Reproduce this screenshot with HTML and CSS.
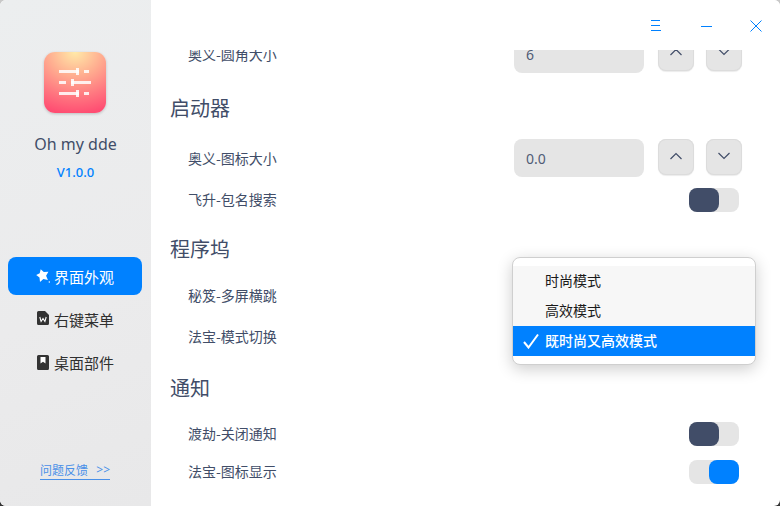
FILE: index.html
```html
<!DOCTYPE html>
<html lang="zh-CN">
<head>
<meta charset="utf-8">
<title>Oh my dde</title>
<link rel="stylesheet" href="styles.css">
</head>
<body>
<div class="window">
  <aside class="sidebar">
    <div class="logo">
      <svg width="62" height="61" viewBox="0 0 62 61" aria-hidden="true">
        <g fill="#fff" fill-opacity=".85">
          <rect x="15" y="18" width="20" height="3"/><rect x="32" y="16" width="3" height="7"/><rect x="40" y="18" width="5" height="3"/>
          <rect x="15" y="29" width="7" height="3"/><rect x="27" y="29" width="20" height="3"/><rect x="27" y="27" width="3" height="7"/>
          <rect x="15" y="40" width="20" height="3"/><rect x="32" y="38" width="3" height="7"/><rect x="40" y="40" width="5" height="3"/>
        </g>
      </svg>
    </div>
    <div class="app-name">Oh my dde</div>
    <div class="app-version">V1.0.0</div>
    <nav class="nav">
      <div class="nav-item nav-item-active">
        <svg class="nav-icon" width="14" height="16" viewBox="0 0 14 16" aria-hidden="true"><path fill="#fff" d="M4.700 1.200 7.800 4.100 12.400 3.700 10.100 7.700 11.900 11.900 7.400 11 4 14 3.500 9.500 .2 7.100 3.700 5.200z"/><circle cx="13.300" cy="14" r=".7" fill="#fff"/></svg>
        <span>界面外观</span>
      </div>
      <div class="nav-item">
        <svg class="nav-icon" width="14" height="16" viewBox="0 0 14 16" aria-hidden="true"><path fill="#333" d="M2.500 0H9l4 4v8.500A1.500 1.500 0 0 1 11.500 14h-9A1.500 1.500 0 0 1 1 12.500v-11A1.500 1.500 0 0 1 2.500 0z"/><path fill="none" stroke="#fff" stroke-width="1.100" d="M3.800 6l1.300 4.500L7 7.500l1.900 3L10.200 6"/></svg>
        <span>右键菜单</span>
      </div>
      <div class="nav-item">
        <svg class="nav-icon" width="14" height="16" viewBox="0 0 14 16" aria-hidden="true"><path fill="#333" d="M2.500 1h9A1.500 1.500 0 0 1 13 2.500v12a1.500 1.500 0 0 1-1.500 1.500h-9A1.500 1.500 0 0 1 1 14.500v-12A1.500 1.500 0 0 1 2.500 1z"/><path fill="#fff" d="M4.500 3h5v6.500L7 7.800 4.500 9.500z"/></svg>
        <span>桌面部件</span>
      </div>
    </nav>
    <a class="feedback"><span>问题反馈</span><span class="feedback-arrows">&gt;&gt;</span></a>
  </aside>

  <main class="main">
    <header class="titlebar">
      <svg width="16" height="12" viewBox="0 0 16 12" class="tb-menu" aria-hidden="true"><path stroke="#0081ff" fill="none" d="M1 .5h9M1 5.500h9M1 10.500h10"/></svg>
      <svg width="12" height="2" viewBox="0 0 12 2" class="tb-min" aria-hidden="true"><path stroke="#0081ff" stroke-width="1" fill="none" d="M0 .5h11"/></svg>
      <svg width="12" height="12" viewBox="0 0 12 12" class="tb-close" aria-hidden="true"><path stroke="#0081ff" fill="none" d="M.5.500l11 11M11.500.500l-11 11"/></svg>
    </header>
    <div class="content">
      <div class="scroll">
        <div class="row row-spin">
          <span class="label">奥义-圆角大小</span>
          <div class="spin"><div class="spin-input">6</div>
            <button class="spin-btn"><svg width="14" height="8" viewBox="0 0 14 8"><path d="M1.500 7 7 1.500 12.500 7" class="chev"/></svg></button>
            <button class="spin-btn"><svg width="14" height="8" viewBox="0 0 14 8"><path d="M1.500 1 7 6.500 12.500 1" class="chev"/></svg></button>
          </div>
        </div>
        <h2 class="heading heading-1">启动器</h2>
        <div class="row row-spin row-spin-2">
          <span class="label">奥义-图标大小</span>
          <div class="spin"><div class="spin-input">0.0</div>
            <button class="spin-btn"><svg width="14" height="8" viewBox="0 0 14 8"><path d="M1.500 7 7 1.500 12.500 7" class="chev"/></svg></button>
            <button class="spin-btn"><svg width="14" height="8" viewBox="0 0 14 8"><path d="M1.500 1 7 6.500 12.500 1" class="chev"/></svg></button>
          </div>
        </div>
        <div class="row row-a">
          <span class="label">飞升-包名搜索</span>
          <div class="toggle"><div class="knob"></div></div>
        </div>
        <h2 class="heading heading-2">程序坞</h2>
        <div class="row row-b"><span class="label">秘笈-多屏横跳</span></div>
        <div class="row row-c"><span class="label">法宝-模式切换</span></div>
        <h2 class="heading heading-3">通知</h2>
        <div class="row row-d">
          <span class="label">渡劫-关闭通知</span>
          <div class="toggle"><div class="knob"></div></div>
        </div>
        <div class="row row-e">
          <span class="label">法宝-图标显示</span>
          <div class="toggle toggle-on"><div class="knob"></div></div>
        </div>
      </div>
    </div>
  </main>

  <div class="menu">
    <div class="menu-item menu-item-hover">时尚模式</div>
    <div class="menu-item menu-item-hover">高效模式</div>
    <div class="menu-item menu-item-selected">
      <svg class="check" width="16" height="16" viewBox="0 0 16 16" aria-hidden="true"><path d="M1 9l4.500 5.500L15 1.500" fill="none" stroke="#fff" stroke-width="2"/></svg>
      既时尚又高效模式
    </div>
  </div>
</div>
</body>
</html>
```

FILE: styles.css
```css
* { box-sizing: border-box; }
html, body { margin: 0; height: 100%; overflow: hidden; }
html { background: linear-gradient(#c8c8c8 0%, #c8c8c8 50%, #333 100%); }
body { font-family: "Noto Sans CJK SC", "Noto Sans", sans-serif; }

.window {
  position: relative;
  display: flex;
  width: 780px;
  height: 506px;
  background: #fff;
  border-radius: 6px;
  overflow: hidden;
}

.sidebar {
  position: relative;
  flex: 0 0 151px;
  display: flex;
  flex-direction: column;
  align-items: center;
  padding-top: 52px;
  background: linear-gradient(160deg, #eceeef 0%, #ebebec 60%, #e8e8e9 100%);
}

.logo {
  width: 62px;
  height: 61px;
  margin-right: 1px;
  border-radius: 11px;
  background: radial-gradient(ellipse 70px 62px at 50% 0%, #ffeaa8 0%, #ffab8f 40%, #ff7780 72%, #ff4d72 100%);
  box-shadow: 0 1px 3px rgba(0, 0, 0, .2);
}
.logo svg { display: block; }

.app-name {
  margin-top: 19px;
  font-family: "Noto Sans", sans-serif;
  font-size: 16px;
  line-height: 24px;
  color: #414d68;
}
.app-version {
  margin-top: 6px;
  font-family: "Noto Sans", sans-serif;
  font-size: 13px;
  font-weight: 500;
  line-height: 20px;
  color: #0081ff;
}

.nav {
  align-self: stretch;
  display: flex;
  flex-direction: column;
  gap: 5px;
  margin: 75px 9px 0 8px;
}
.nav-item {
  display: flex;
  align-items: center;
  gap: 4px;
  height: 38px;
  padding-left: 28px;
  border-radius: 8px;
  font-size: 15px;
  font-weight: 400;
  color: #303030;
}
.nav-item-active { background: #0081ff; color: #fff; }
.nav-icon { flex: none; }

.feedback {
  position: absolute;
  left: 40px;
  top: 460px;
  display: flex;
  justify-content: space-between;
  width: 70px;
  height: 20px;
  border-bottom: 1px solid #4a90e8;
  font-size: 12px;
  line-height: 19px;
  color: #4a90e8;
}
.feedback-arrows { font-family: "Noto Sans", sans-serif; }

.main {
  flex: 1;
  display: flex;
  flex-direction: column;
  min-width: 0;
}
.titlebar {
  flex: 0 0 50px;
  display: flex;
  align-items: flex-start;
  background: #fff;
}
.tb-menu { margin: 20px 0 0 499px; }
.tb-min { margin: 26px 0 0 35px; }
.tb-close { margin: 20px 0 0 37px; }

.content { flex: 1; overflow: hidden; }
.scroll { margin-top: -15px; padding: 0 38px 0 19px; }

.row {
  display: flex;
  align-items: center;
  justify-content: space-between;
  height: 24px;
  padding-left: 18px;
}
.row-spin { height: 38px; }
.row-spin-2 { margin-top: 16px; }
.row-a { margin-top: 11px; padding-right: 3px; }
.row-b { margin-top: 20px; }
.row-c { margin-top: 17px; }
.row-d { margin-top: 19px; padding-right: 3px; }
.row-e { margin-top: 14px; padding-right: 3px; }

.label { margin-bottom: 2px; font-size: 14px; color: #414d68; }
.row-spin .label { margin-bottom: 0; }

.heading {
  margin: 0;
  height: 30px;
  font-size: 20px;
  font-weight: 400;
  line-height: 30px;
  color: #414d68;
}
.heading-1 { margin-top: 20px; }
.heading-2 { margin-top: 22px; }
.heading-3 { margin-top: 24px; }

.spin { display: flex; align-items: flex-start; }
.spin-input {
  width: 130px;
  height: 38px;
  padding-left: 12px;
  border-radius: 8px;
  background: #e5e5e5;
  font-family: "Noto Sans", sans-serif;
  font-size: 14px;
  line-height: 40px;
  color: #505c76;
}
.spin-btn {
  display: flex;
  align-items: center;
  justify-content: center;
  width: 36px;
  height: 36px;
  margin-left: 12px;
  padding: 0 0 2px;
  border: 0;
  border-radius: 8px;
  background: #e5e5e5;
  box-shadow: inset 0 0 0 1px #dcdcdc, 0 1px 1px rgba(0, 0, 0, .08);
}
.spin-input + .spin-btn { margin-left: 14px; }
.chev { fill: none; stroke: #414d68; stroke-width: 1.2; }

.toggle {
  width: 50px;
  height: 24px;
  border-radius: 8px;
  background: #e5e5e5;
}
.knob {
  width: 30px;
  height: 24px;
  border-radius: 8px;
  background: #414d68;
}
.toggle-on { display: flex; justify-content: flex-end; }
.toggle-on .knob { background: #0081ff; }

.menu {
  position: absolute;
  left: 512px;
  top: 257px;
  width: 244px;
  height: 108px;
  padding: 8px 0;
  border: 1px solid #cfcfcf;
  border-radius: 8px;
  background: #fff;
  box-shadow: 0 4px 16px rgba(0, 0, 0, .2);
}
.menu-item {
  position: relative;
  height: 30px;
  padding-left: 32px;
  font-size: 14px;
  line-height: 28px;
  color: #1a1a1a;
}
.menu-item-hover { background: #f7f7f7; }
.menu-item-selected { background: #0081ff; color: #fff; font-weight: 500; }
.check { position: absolute; left: 10px; top: 7px; }
```
